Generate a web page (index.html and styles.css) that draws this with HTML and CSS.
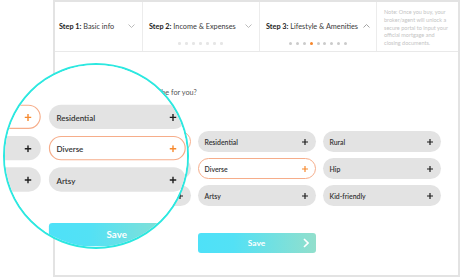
FILE: index.html
```html
<!DOCTYPE html>
<html>
<head>
<meta charset="utf-8">
<link rel="stylesheet" href="styles.css">
</head>
<body>
<div class="card">
  <div class="steps">
    <div class="step step-first">
      <div class="step-title"><span><b>Step 1:</b> Basic info</span><svg class="chev" viewBox="0 0 7 4" width="7" height="4"><path d="M0.5 0.5 L3.5 3.5 L6.5 0.5"/></svg></div>
    </div>
    <div class="step">
      <div class="step-title"><span><b>Step 2:</b> Income &amp; Expenses</span><svg class="chev" viewBox="0 0 7 4" width="7" height="4"><path d="M0.5 0.5 L3.5 3.5 L6.5 0.5"/></svg></div>
      <div class="dots dots-light"><i></i><i></i><i></i><i></i><i></i><i></i><i></i></div>
    </div>
    <div class="step step-third">
      <div class="step-title"><span><b>Step 3:</b> Lifestyle &amp; Amenities</span><svg class="chev chev-up" viewBox="0 0 7 4" width="7" height="4"><path d="M0.5 3.5 L3.5 0.5 L6.5 3.5"/></svg></div>
      <div class="dots"><i></i><i></i><i></i><i class="on"></i><i></i><i></i><i></i><i></i><i></i></div>
    </div>
    <div class="note">Note: Once you buy, your<br>broker/agent will unlock a<br>secure portal to input your<br>official mortgage and<br>closing documents.</div>
  </div>
  <div class="body">
    <p class="question">What's the neighborhood vibe for you?</p>
    <div class="options">
      <div class="pill sel"><span>Suburban</span><svg class="plus" viewBox="0 0 6 6" width="6" height="6"><path d="M3 0V6M0 3H6"/></svg></div>
      <div class="pill"><span>Residential</span><svg class="plus" viewBox="0 0 6 6" width="6" height="6"><path d="M3 0V6M0 3H6"/></svg></div>
      <div class="pill"><span>Rural</span><svg class="plus" viewBox="0 0 6 6" width="6" height="6"><path d="M3 0V6M0 3H6"/></svg></div>
      <div class="pill"><span>Urban</span><svg class="plus" viewBox="0 0 6 6" width="6" height="6"><path d="M3 0V6M0 3H6"/></svg></div>
      <div class="pill sel"><span>Diverse</span><svg class="plus" viewBox="0 0 6 6" width="6" height="6"><path d="M3 0V6M0 3H6"/></svg></div>
      <div class="pill"><span>Hip</span><svg class="plus" viewBox="0 0 6 6" width="6" height="6"><path d="M3 0V6M0 3H6"/></svg></div>
      <div class="pill"><span>Quiet</span><svg class="plus" viewBox="0 0 6 6" width="6" height="6"><path d="M3 0V6M0 3H6"/></svg></div>
      <div class="pill"><span>Artsy</span><svg class="plus" viewBox="0 0 6 6" width="6" height="6"><path d="M3 0V6M0 3H6"/></svg></div>
      <div class="pill"><span>Kid-friendly</span><svg class="plus" viewBox="0 0 6 6" width="6" height="6"><path d="M3 0V6M0 3H6"/></svg></div>
    </div>
    <button class="save"><span class="save-label">Save</span><svg class="save-chev" viewBox="0 0 6 10" width="6" height="10"><path d="M1 1 L5 5 L1 9"/></svg></button>
  </div>
</div>
<div class="lens">
  <div class="body zoomed">
    <p class="question">What's the neighborhood vibe for you?</p>
    <div class="options">
      <div class="pill sel"><span>Suburban</span><svg class="plus" viewBox="0 0 6 6" width="6" height="6"><path d="M3 0V6M0 3H6"/></svg></div>
      <div class="pill"><span>Residential</span><svg class="plus" viewBox="0 0 6 6" width="6" height="6"><path d="M3 0V6M0 3H6"/></svg></div>
      <div class="pill"><span>Rural</span><svg class="plus" viewBox="0 0 6 6" width="6" height="6"><path d="M3 0V6M0 3H6"/></svg></div>
      <div class="pill"><span>Urban</span><svg class="plus" viewBox="0 0 6 6" width="6" height="6"><path d="M3 0V6M0 3H6"/></svg></div>
      <div class="pill sel"><span>Diverse</span><svg class="plus" viewBox="0 0 6 6" width="6" height="6"><path d="M3 0V6M0 3H6"/></svg></div>
      <div class="pill"><span>Hip</span><svg class="plus" viewBox="0 0 6 6" width="6" height="6"><path d="M3 0V6M0 3H6"/></svg></div>
      <div class="pill"><span>Quiet</span><svg class="plus" viewBox="0 0 6 6" width="6" height="6"><path d="M3 0V6M0 3H6"/></svg></div>
      <div class="pill"><span>Artsy</span><svg class="plus" viewBox="0 0 6 6" width="6" height="6"><path d="M3 0V6M0 3H6"/></svg></div>
      <div class="pill"><span>Kid-friendly</span><svg class="plus" viewBox="0 0 6 6" width="6" height="6"><path d="M3 0V6M0 3H6"/></svg></div>
    </div>
    <button class="save"><span class="save-label">Save</span><svg class="save-chev" viewBox="0 0 6 10" width="6" height="10"><path d="M1 1 L5 5 L1 9"/></svg></button>
  </div>
</div>
</body>
</html>
```

FILE: styles.css
```css
* { box-sizing: border-box; margin: 0; padding: 0; }
html, body { width: 460px; height: 277px; overflow: hidden; background: #fff; }
body { font-family: Lato, "Open Sans", sans-serif; position: relative; color: #2a2a2a; }

.card {
  margin-left: 53px;
  width: 407px;
  height: 277px;
  border: 2px solid #e3e3e3;
  display: flex;
  flex-direction: column;
}

.steps {
  display: grid;
  grid-template-columns: 88px 117px 117px 1fr;
  height: 50px;
  border-bottom: 1px solid #e9e9e9;
}
.step {
  border-right: 1px solid #ececec;
  padding: 19px 7px 0 6px;
}
.step-first { padding-left: 4px; }
.step-third { padding-right: 6px; }
.step-title {
  display: flex;
  justify-content: space-between;
  align-items: center;
  gap: 3px;
  height: 10px;
  font-size: 7.3px;
  color: #3a3a3a;
  white-space: nowrap;
}
.step-title b { font-weight: 700; color: #222; }
.chev { flex: none; fill: none; stroke: #b3b3b3; stroke-width: 0.9; }
.chev-up { stroke: #9a9a9a; }

.dots {
  display: flex;
  justify-content: center;
  gap: 3.8px;
  margin-top: 11px;
}
.dots i {
  display: block;
  width: 3px;
  height: 3px;
  border-radius: 50%;
  background: #cbcbcb;
}
.dots i.on { background: #f7862a; }
.dots-light { gap: 4.5px; }
.dots-light i { width: 2.6px; height: 2.6px; background: #e6e6e6; }

.note {
  padding: 7px 4px 0 7px;
  font-size: 5.5px;
  line-height: 7.8px;
  color: #c4c4c4;
  white-space: nowrap;
}

.body {
  display: flex;
  flex-direction: column;
  align-items: center;
  padding-top: 36px;
  background: #fff;
}
.question {
  width: 368px;
  font-size: 7.3px;
  line-height: 10px;
  color: #555;
}
.options {
  display: grid;
  grid-template-columns: repeat(3, 118px);
  gap: 6px 7px;
  margin-top: 33px;
}
.pill {
  height: 21px;
  border-radius: 11px;
  background: #e3e3e3;
  display: flex;
  align-items: center;
  justify-content: space-between;
  padding: 0 8px 0 7px;
  font-size: 6.9px;
  font-weight: 600;
  color: #333;
}
.plus { fill: none; stroke: #1e1e1e; stroke-width: 1.2; }
.pill.sel { background: #fff; border: 1px solid #f6ad8a; padding: 0 7px 0 6px; }
.pill.sel .plus { stroke: #f7892d; }

.save {
  margin-top: 27px;
  width: 118px;
  height: 20px;
  border: none;
  border-radius: 3px;
  background: linear-gradient(90deg, #4ee1f8 0%, #53e1f5 30%, #92dfcc 100%);
  display: grid;
  grid-template-columns: 1fr auto 1fr;
  align-items: center;
  padding: 0 7px;
  font-family: Lato, "Open Sans", sans-serif;
  font-size: 8.4px;
  font-weight: 700;
  color: #fff;
}
.save-label { grid-column: 2; }
.save-chev { grid-column: 3; justify-self: end; fill: none; stroke: #fff; stroke-width: 1.6; }

.lens {
  position: absolute;
  left: 3px;
  top: 63px;
  width: 186px;
  height: 186px;
  border-radius: 50%;
  border: 2px solid #2ce8e0;
  overflow: hidden;
  background: #fff;
}
.zoomed {
  position: absolute;
  left: -121.7px;
  top: -51.7px;
  width: 403px;
  transform: scale(1.16);
  transform-origin: 0 0;
}
```
